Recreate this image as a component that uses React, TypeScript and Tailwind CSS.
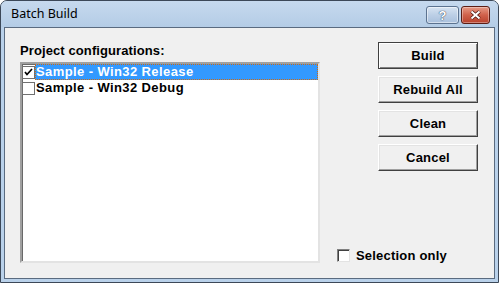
import React from 'react';

const ui = { fontFamily: '"Liberation Sans", Arial, sans-serif' };
const title = { fontFamily: '"Noto Sans", "Liberation Sans", sans-serif' };

const ListCheck: React.FC<{ checked?: boolean }> = ({ checked }) => (
  <span className="w-[13px] h-[13px] border border-[#707070] bg-white flex items-center justify-center shrink-0">
    {checked && (
      <svg width="9" height="9" viewBox="0 0 9 9">
        <path d="M1 4 L3 6.5 L8 1" stroke="#000" strokeWidth="1.7" fill="none" />
      </svg>
    )}
  </span>
);

const Btn: React.FC<{ label: string; def?: boolean }> = ({ label, def }) => (
  <div
    className={`w-[100px] h-[27px] flex items-center justify-center bg-[#f0f0f0] text-[13px] font-bold tracking-[0.2px] text-black ${
      def
        ? 'border border-[#404040] shadow-[inset_1px_1px_0_#fff,inset_-1px_-1px_0_#808080]'
        : 'border border-t-white border-l-white border-r-[#404040] border-b-[#404040] shadow-[inset_-1px_-1px_0_#a0a0a0,inset_1px_1px_0_#e3e3e3]'
    }`}
    style={ui}
  >
    {label}
  </div>
);

export default function App() {
  return (
    <div className="w-[499px] h-[283px] bg-[#b9d1ea] border border-[#3c4858] rounded-t-[7px] flex flex-col px-[3px] pb-[3px] overflow-hidden">
      {/* Title bar */}
      <div className="h-[26px] flex items-center bg-gradient-to-b from-[#c6d9ee] to-[#b4cce6] -mx-[3px] px-[10px]">
        <span className="text-[12.5px] text-black" style={title}>Batch Build</span>
        <div className="ml-auto flex gap-[2px] mt-[2px] -mr-[2px]">
          <div className="w-[33px] h-[18px] rounded-[3px] border border-[#5c7390] bg-gradient-to-b from-[#d8e4f2] via-[#bccfe6] to-[#a9c0dc] flex items-center justify-center shadow-[inset_0_0_0_1px_rgba(255,255,255,0.5)]">
            <span className="text-[13px] font-bold text-white leading-none [text-shadow:0_0_1px_#2c3e55,0_0_1px_#2c3e55]" style={ui}>?</span>
          </div>
          <div className="w-[29px] h-[18px] rounded-[3px] border border-[#5c1d14] bg-gradient-to-b from-[#e59a86] via-[#d0614b] to-[#b8412c] flex items-center justify-center shadow-[inset_0_0_0_1px_rgba(255,255,255,0.35)]">
            <svg width="13" height="10" viewBox="0 0 13 10">
              <path d="M2.5 1.5 L10.5 8.5 M10.5 1.5 L2.5 8.5" stroke="#4a1a12" strokeWidth="3.6" />
              <path d="M2.5 1.5 L10.5 8.5 M10.5 1.5 L2.5 8.5" stroke="#fff" strokeWidth="2" />
            </svg>
          </div>
        </div>
      </div>

      {/* Client area */}
      <div className="flex-1 border border-[#5a6b80] bg-[#f0f0f0] flex pl-[15px] pt-[14px]">
        <div className="w-[300px] flex flex-col">
          <div className="h-[20px] text-[13px] font-bold tracking-[0.1px] text-black leading-[16px] pt-[1px]" style={ui}>
            Project configurations:
          </div>
          <div className="h-[201px] border-2 border-t-[#a0a0a0] border-l-[#a0a0a0] border-r-[#e3e3e3] border-b-[#e3e3e3] bg-white shadow-[inset_1px_1px_0_#696969]">
            <div className="flex items-center h-[16px]">
              <ListCheck checked />
              <span
                className="flex-1 h-[16px] bg-[#3399ff] border border-dotted border-[#d06a10] text-white text-[13px] font-bold tracking-[0.4px] leading-[14px]"
                style={ui}
              >
                Sample - Win32 Release
              </span>
            </div>
            <div className="flex items-center h-[16px]">
              <ListCheck />
              <span className="flex-1 text-black text-[13px] font-bold tracking-[0.4px] leading-[14px] pl-[1px]" style={ui}>
                Sample - Win32 Debug
              </span>
            </div>
          </div>
        </div>

        <div className="ml-[17px] w-[141px] flex flex-col">
          <div className="ml-auto flex flex-col gap-[7px]">
            <Btn label="Build" def />
            <Btn label="Rebuild All" />
            <Btn label="Clean" />
            <Btn label="Cancel" />
          </div>
          <div className="mt-auto mb-[13px] flex items-center gap-[6px]">
            <span className="w-[13px] h-[13px] bg-white border border-t-[#808080] border-l-[#808080] border-r-[#e3e3e3] border-b-[#e3e3e3] shadow-[inset_1px_1px_0_#404040]" />
            <span className="text-[13px] font-bold tracking-[0.2px] text-black" style={ui}>Selection only</span>
          </div>
        </div>
      </div>
    </div>
  );
}
